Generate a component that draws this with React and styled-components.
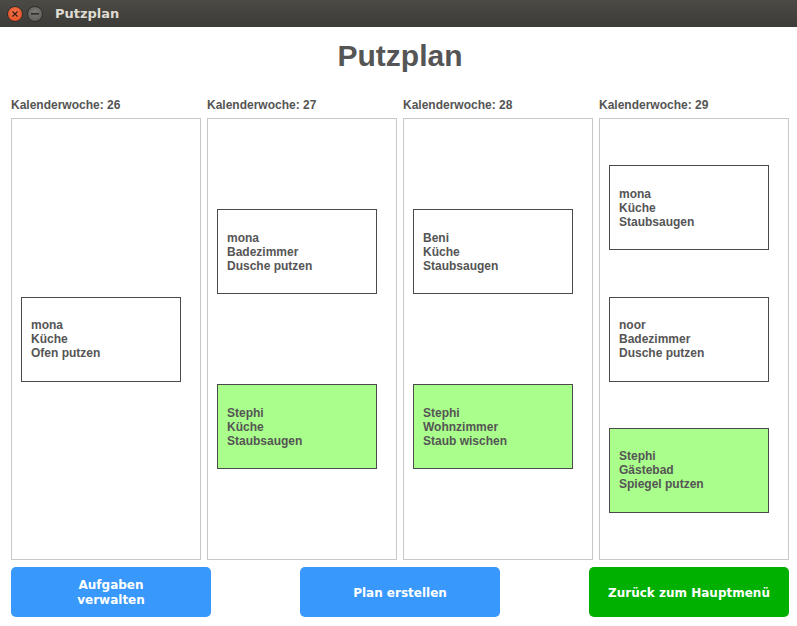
import React from 'react';
import styled, { createGlobalStyle } from 'styled-components';

const GlobalStyle = createGlobalStyle`
  html, body {
    margin: 0;
    padding: 0;
    background: #ffffff;
  }
`;

const weeks = [
  { kw: 26, tasks: [{ who: 'mona', room: 'Küche', task: 'Ofen putzen' }] },
  {
    kw: 27,
    tasks: [
      { who: 'mona', room: 'Badezimmer', task: 'Dusche putzen' },
      { who: 'Stephi', room: 'Küche', task: 'Staubsaugen', mine: true },
    ],
  },
  {
    kw: 28,
    tasks: [
      { who: 'Beni', room: 'Küche', task: 'Staubsaugen' },
      { who: 'Stephi', room: 'Wohnzimmer', task: 'Staub wischen', mine: true },
    ],
  },
  {
    kw: 29,
    tasks: [
      { who: 'mona', room: 'Küche', task: 'Staubsaugen' },
      { who: 'noor', room: 'Badezimmer', task: 'Dusche putzen' },
      { who: 'Stephi', room: 'Gästebad', task: 'Spiegel putzen', mine: true },
    ],
  },
];

const Window = styled.div`
  width: 797px;
  height: 626px;
  display: flex;
  flex-direction: column;
  background: #ffffff;
  overflow: hidden;
`;

const TitleBar = styled.div`
  height: 27px;
  flex: none;
  display: flex;
  align-items: center;
  padding-left: 7px;
  gap: 4px;
  background: linear-gradient(#4b4a45, #3c3b37);
  box-sizing: border-box;
`;

const WinButton = styled.span`
  width: 16px;
  height: 16px;
  border-radius: 50%;
  display: flex;
  align-items: center;
  justify-content: center;
  background: ${(p) => (p.$close ? 'radial-gradient(circle at 50% 40%, #f3774f, #e0471c)' : 'radial-gradient(circle at 50% 40%, #7c7b76, #5a5955)')};
  border: 1px solid #2f2e2b;
  box-sizing: border-box;
`;

const WinTitle = styled.span`
  margin-left: 8px;
  font-family: 'DejaVu Sans', sans-serif;
  font-weight: bold;
  font-size: 13px;
  color: #dfdbd2;
`;

const Content = styled.div`
  flex: 1;
  display: flex;
  flex-direction: column;
  padding: 0 8px 10px 11px;
`;

const Heading = styled.h1`
  margin: 12px 0 0;
  height: 34px;
  line-height: 34px;
  text-align: center;
  font-family: 'Liberation Sans', Arial, sans-serif;
  font-weight: bold;
  font-size: 30px;
  color: #555555;
`;

const Weeks = styled.div`
  margin-top: 25px;
  display: grid;
  grid-template-columns: repeat(4, 190px);
  column-gap: 6px;
`;

const Week = styled.div`
  display: flex;
  flex-direction: column;
  gap: 5px;
`;

const WeekLabel = styled.div`
  height: 15px;
  line-height: 15px;
  font-family: 'Liberation Sans', Arial, sans-serif;
  font-weight: bold;
  font-size: 12px;
  color: #555555;
`;

const WeekBox = styled.div`
  height: 442px;
  box-sizing: border-box;
  border: 1px solid #c8c8c8;
  display: flex;
  flex-direction: column;
  justify-content: space-evenly;
  padding-left: 9px;
`;

const Card = styled.div`
  width: 160px;
  height: 85px;
  flex: none;
  box-sizing: border-box;
  border: 1px solid #4a4a4a;
  background: ${(p) => (p.$mine ? '#aaff8c' : '#ffffff')};
  display: flex;
  flex-direction: column;
  justify-content: center;
  padding-left: 9px;
  font-family: 'Liberation Sans', Arial, sans-serif;
  font-weight: bold;
  font-size: 12px;
  line-height: 14px;
  color: #555555;
`;

const Actions = styled.div`
  margin-top: 7px;
  display: flex;
  justify-content: space-between;
`;

const ActionButton = styled.button`
  width: 200px;
  height: 50px;
  border: none;
  border-radius: 5px;
  background: ${(p) => (p.$green ? '#00b000' : '#3898fc')};
  color: #ffffff;
  font-family: 'DejaVu Sans', sans-serif;
  font-weight: bold;
  font-size: 12px;
  line-height: 15px;
  padding: 2px 8px 0;
  cursor: pointer;
`;

export default function App() {
  return (
    <>
      <GlobalStyle />
      <Window>
        <TitleBar>
          <WinButton $close>
            <svg width="6" height="6" viewBox="0 0 6 6">
              <path d="M0.5 0.5 L5.5 5.5 M5.5 0.5 L0.5 5.5" stroke="#3a1a10" strokeWidth="1.2" />
            </svg>
          </WinButton>
          <WinButton>
            <svg width="8" height="2" viewBox="0 0 8 2">
              <rect x="0" y="0" width="8" height="1.6" fill="#2e2d2a" />
            </svg>
          </WinButton>
          <WinTitle>Putzplan</WinTitle>
        </TitleBar>
        <Content>
          <Heading>Putzplan</Heading>
          <Weeks>
            {weeks.map((w) => (
              <Week key={w.kw}>
                <WeekLabel>Kalenderwoche: {w.kw}</WeekLabel>
                <WeekBox>
                  {w.tasks.map((t, i) => (
                    <Card key={i} $mine={t.mine}>
                      <div>{t.who}</div>
                      <div>{t.room}</div>
                      <div>{t.task}</div>
                    </Card>
                  ))}
                </WeekBox>
              </Week>
            ))}
          </Weeks>
          <Actions>
            <ActionButton>
              Aufgaben
              <br />
              verwalten
            </ActionButton>
            <ActionButton>Plan erstellen</ActionButton>
            <ActionButton $green>Zurück zum Hauptmenü</ActionButton>
          </Actions>
        </Content>
      </Window>
    </>
  );
}
